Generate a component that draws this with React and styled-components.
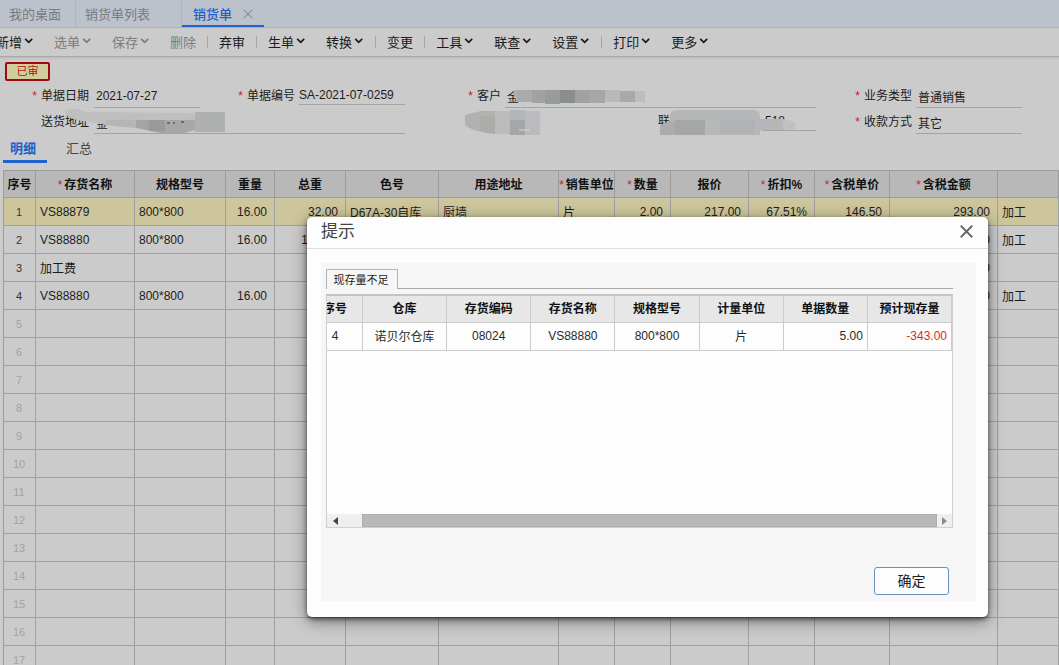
import React from "react";
import styled, { createGlobalStyle, css } from "styled-components";

const Global = createGlobalStyle`
  * { box-sizing: border-box; }
  body { margin: 0; background: #cbcbcb; }
  body, button, input, table {
    font-family: "Liberation Sans", "Noto Sans CJK SC", sans-serif;
    font-size: 12px;
    color: #1c1c1c;
  }
  button { border: 0; padding: 0; background: none; cursor: pointer; }
`;

const Page = styled.div`
  position: relative;
  display: flex;
  flex-direction: column;
  height: 100vh;
  overflow: hidden;
`;

/* Window tabs */
const WindowTabs = styled.nav`
  display: flex;
  flex: none;
  height: 28px;
  background: #bcc2cc;
  border-bottom: 1px solid #adb0b4;
`;
const WindowTab = styled.button`
  display: flex;
  align-items: center;
  justify-content: space-between;
  height: 27px;
  padding: 0 14px 0 9px;
  font-size: 13px;
  color: #777a7f;
  border-right: 1px solid #b1b6be;
  ${(p) => p.$wide && css`padding-right: 31px;`}
  ${(p) =>
    p.$active &&
    css`
      width: 82px;
      padding: 2px 11px 0;
      color: #1f5fc8;
      font-weight: 500;
      border-right: 0;
      border-bottom: 2px solid #1f63cf;
    `}
`;

/* Toolbar */
const Toolbar = styled.div`
  display: flex;
  align-items: center;
  flex: none;
  height: 29px;
  margin-left: -15px;
  border-bottom: 1px solid #a9a9a9;
  box-shadow: 0 1px 2px #b5b5b5;
`;
const ToolButton = styled.button`
  display: flex;
  align-items: center;
  gap: 2px;
  height: 26px;
  padding: 0 10px 2px 11px;
  font-size: 13px;
  white-space: nowrap;
  color: ${(p) => (p.disabled ? "#7d7d7d" : "#1c1c1c")};
`;
const Divider = styled.span`
  width: 1px;
  height: 12px;
  margin: 0 0 0 ${(p) => (p.$afterMenu ? 2 : 1)}px;
  background: #a6a6a6;
`;

/* Document form */
const StatusBadge = styled.div`
  flex: none;
  align-self: flex-start;
  width: 45px;
  height: 19px;
  margin: 5px 0 0 5px;
  border: 2px solid #a3090c;
  border-radius: 2px;
  background: #d0cd9d;
  color: #b5160f;
  font-size: 11px;
  line-height: 15px;
  text-align: center;
`;
const Form = styled.form`
  display: grid;
  flex: none;
  grid-template-columns: 94px 106px 99px 106px 100px minmax(0, 1fr) 100px 106px;
  grid-auto-rows: 26px;
  padding: 1px 37px 0 0;
`;
const Label = styled.label`
  padding-right: ${(p) => (p.$loose ? 4 : 5)}px;
  line-height: 28px;
  text-align: right;
  white-space: nowrap;
`;
const Star = styled.span`
  margin-right: ${(p) => (p.$near ? 2 : 4)}px;
  color: #c8202c;
  font-weight: 400;
`;
const Field = styled.div`
  position: relative;
  display: flex;
  min-width: 0;
  ${(p) => p.$span && css`grid-column: span ${p.$span};`}
`;
const TextInput = styled.input`
  flex: 1;
  min-width: 0;
  width: 100%;
  height: ${(p) => (p.$short ? 23 : 26)}px;
  padding: 3px 0 0 ${(p) => (p.$flush ? 0 : 2)}px;
  border: 0;
  border-bottom: 1px solid #a4a4a4;
  background: transparent;
  outline: none;
`;
const ContactLabel = styled.label`
  width: 105px;
  margin-left: 153px;
  height: 23px;
  line-height: 27px;
  border-bottom: 1px solid #c3c3c3;
`;
const Mosaic = styled.svg`
  position: absolute;
  left: ${(p) => p.$x}px;
  top: ${(p) => p.$y}px;
  pointer-events: none;
`;

/* Section tabs */
const SectionTabs = styled.div`
  display: flex;
  flex: none;
  gap: 12px;
  padding: 1px 3px 7px;
`;
const SectionTab = styled.button`
  width: 44px;
  height: 28px;
  padding-right: 4px;
  font-size: 13px;
  color: ${(p) => (p.$active ? "#1f5fc8" : "#444")};
  font-weight: ${(p) => (p.$active ? 700 : 400)};
  border-bottom: 3px solid ${(p) => (p.$active ? "#1f63cf" : "transparent")};
`;

/* Order lines */
const GridWrap = styled.div`
  flex: 1;
  min-height: 0;
  overflow: hidden;
  padding-left: 3px;
`;
const Grid = styled.table`
  width: 100%;
  table-layout: fixed;
  border-collapse: separate;
  border-spacing: 0;
  border-left: 1px solid #9c9c9c;
`;
const Th = styled.th`
  height: 28px;
  padding: 0 0 2px;
  overflow: hidden;
  white-space: nowrap;
  background: #b8b8b9;
  border: solid #9c9c9c;
  border-width: 1px 1px 1px 0;
  color: #111;
`;
const Tr = styled.tr`
  background: ${(p) => (p.$selected ? "#cdc69c" : "transparent")};
`;
const Td = styled.td`
  height: 28px;
  padding: 0 7px 0 4px;
  overflow: hidden;
  white-space: nowrap;
  text-align: ${(p) => p.$align || "left"};
  border: solid #a0a0a0;
  border-width: 0 1px 1px 0;
`;
const IndexTd = styled(Td)`
  padding: 0 1px 0 0;
  text-align: center;
  font-size: 11px;
  color: ${(p) => (p.$empty ? "#a2a2a2" : "#333")};
`;

/* Dialog */
const Overlay = styled.div`
  position: absolute;
  inset: 0;
  display: flex;
  align-items: flex-start;
  padding: 217px 71px 0 307px;
`;
const Dialog = styled.section`
  flex: 1;
  min-width: 0;
  padding-bottom: 16px;
  background: #fdfdfd;
  border-radius: 5px;
  box-shadow: 0 2px 4px rgba(0, 0, 0, 0.55), 0 4px 16px rgba(0, 0, 0, 0.45);
`;
const DialogHead = styled.header`
  display: flex;
  align-items: center;
  justify-content: space-between;
  height: 32px;
  padding: 0 14px 2px;
  border-bottom: 1px solid #dedede;
`;
const DialogTitle = styled.h2`
  margin: 0;
  font-size: 17px;
  line-height: 24px;
  font-weight: 400;
  color: #444;
`;
const CloseButton = styled.button`
  display: flex;
  align-items: center;
  justify-content: center;
  width: 15px;
  height: 15px;
`;
const Panel = styled.div`
  margin: 14px 12px 0 14px;
  padding: 6px 23px 6px 5px;
  background: #f6f6f6;
`;
const TabRow = styled.div`
  display: flex;
  height: 20px;
`;
const DialogTab = styled.button`
  width: 72px;
  padding-right: 2px;
  border: 1px solid #b4b4b4;
  border-bottom: 0;
  font-size: 11px;
  line-height: 16px;
`;
const TabRule = styled.span`
  flex: 1;
  border-bottom: 1px solid #a8a8a8;
`;
const StockBox = styled.div`
  display: flex;
  flex-direction: column;
  height: 234px;
  margin-top: 5px;
  overflow: hidden;
  background: #fdfdfd;
  border: 1px solid #cfcfcf;
  border-top: 2px solid #c4c4c4;
`;
const StockScroll = styled.div`
  flex: 1;
  overflow: hidden;
`;
const StockTable = styled.table`
  width: calc(100% + 19px);
  margin-left: -19px;
  table-layout: fixed;
  border-collapse: separate;
  border-spacing: 0;
`;
const StockTh = styled.th`
  height: 27px;
  padding: 0 0 4px;
  background: #e7e7e8;
  border: solid #cbcbcb;
  border-width: 0 1px 1px 0;
  color: #111;
`;
const StockTd = styled.td`
  height: 28px;
  padding: 0 4px 2px;
  border: solid #cbcbcb;
  border-width: 0 1px 1px 0;
  text-align: ${(p) => (p.$num ? "right" : "center")};
  color: ${(p) => (p.$warn ? "#e02a2a" : "#2b2b2b")};
`;
const ScrollBar = styled.div`
  display: grid;
  grid-template-columns: 17px 18px minmax(0, 1fr) 15px;
  align-items: center;
  justify-items: center;
  height: 13px;
  background: #efefef;
`;
const Thumb = styled.span`
  grid-column: 3;
  width: 100%;
  height: 13px;
  background: #b9b9b9;
  border: 1px solid #adadad;
`;
const Actions = styled.footer`
  display: flex;
  justify-content: flex-end;
  margin: 39px 4px 0 0;
`;
const OkButton = styled.button`
  width: 75px;
  height: 28px;
  padding-bottom: 2px;
  font-size: 14px;
  background: #fdfdfd;
  border: 1px solid #6d8fbd;
  border-radius: 3px;
`;

const Chevron = () => (
  <svg width="9" height="8" viewBox="0 0 9 8" fill="none" stroke="currentColor" strokeWidth="1.8" aria-hidden="true">
    <path d="M1.2 1.9 4.7 5.3 8.2 1.9" />
  </svg>
);
const Cross = ({ size, color, width }) => (
  <svg width={size} height={size} viewBox="0 0 12 12" fill="none" stroke={color} strokeWidth={width} aria-hidden="true">
    <path d="M.7.7 11.3 11.3M11.3.7.7 11.3" />
  </svg>
);

const tools = [
  { name: "新增", menu: true },
  { name: "选单", menu: true, off: true },
  { name: "保存", menu: true, off: true },
  { name: "删除", off: true },
  "|",
  { name: "弃审" },
  "|",
  { name: "生单", menu: true },
  { name: "转换", menu: true },
  "||",
  { name: "变更" },
  "|",
  { name: "工具", menu: true },
  { name: "联查", menu: true },
  { name: "设置", menu: true },
  "||",
  { name: "打印", menu: true },
  { name: "更多", menu: true },
];

const columns = [
  { title: "序号", width: 32 },
  { title: "存货名称", width: 99, required: true },
  { title: "规格型号", width: 91 },
  { title: "重量", width: 49, align: "right" },
  { title: "总重", width: 71, align: "right" },
  { title: "色号", width: 93 },
  { title: "用途地址", width: 120 },
  { title: "销售单位", width: 56, required: true },
  { title: "数量", width: 56, required: true, align: "right" },
  { title: "报价", width: 78, align: "right" },
  { title: "折扣%", width: 66, required: true, align: "right" },
  { title: "含税单价", width: 75, required: true, align: "right" },
  { title: "含税金额", width: 108, required: true, align: "right" },
  { title: "" },
];

const lines = [
  ["VS88879", "800*800", "16.00", "32.00", "D67A-30自库", "厨墙", "片", "2.00", "217.00", "67.51%", "146.50", "293.00", "加工"],
  ["VS88880", "800*800", "16.00", "160.00", "", "", "", "", "", "", "", "0.00", "加工"],
  ["加工费", "", "", "", "", "", "", "", "", "", "", "0.00", ""],
  ["VS88880", "800*800", "16.00", "", "", "", "", "", "", "", "", "0.00", "加工"],
];
const rows = Array.from({ length: 17 }, (_, i) => lines[i] || null);

const stockHeads = ["序号", "仓库", "存货编码", "存货名称", "规格型号", "计量单位", "单据数量", "预计现存量"];
const stock = ["4", "诺贝尔仓库", "08024", "VS88880", "800*800", "片", "5.00", "-343.00"];

const Req = () => <Star>*</Star>;

export default function App() {
  return (
    <Page>
      <Global />
      <WindowTabs>
        <WindowTab>我的桌面</WindowTab>
        <WindowTab $wide>销货单列表</WindowTab>
        <WindowTab $active>
          销货单
          <Cross size={10} color="#8b8f95" width={1.3} />
        </WindowTab>
      </WindowTabs>

      <Toolbar>
        {tools.map((t, i) =>
          typeof t === "string" ? (
            <Divider key={i} $afterMenu={t === "||"} />
          ) : (
            <ToolButton key={i} disabled={t.off}>
              {t.name}
              {t.menu && <Chevron />}
            </ToolButton>
          )
        )}
      </Toolbar>

      <StatusBadge>已审</StatusBadge>

      <Form>
        <Label htmlFor="date"><Req />单据日期</Label>
        <Field><TextInput id="date" defaultValue="2021-07-27" /></Field>
        <Label htmlFor="number" $loose><Req />单据编号</Label>
        <Field><TextInput id="number" $short $flush defaultValue="SA-2021-07-0259" /></Field>
        <Label htmlFor="customer" $loose><Req />客户</Label>
        <Field>
          <TextInput id="customer" defaultValue="金" />
          <Mosaic $x={6} $y={7} width="136" height="15">
            <path d="M4 1h3v12H6L2 4z" fill="#aeb0b0" />
            <rect x="6" y="1" width="15" height="12" fill="#a9aaa9" />
            <rect x="21" y="1" width="13" height="13" fill="#a0a3a4" />
            <rect x="34" y="1" width="15" height="14" fill="#989c9d" />
            <rect x="49" y="1" width="15" height="13" fill="#8b8e8e" />
            <rect x="64" y="1" width="15" height="13" fill="#a0a2a2" />
            <rect x="79" y="1" width="15" height="13" fill="#a7a7a7" />
            <rect x="94" y="1" width="15" height="12" fill="#b7b9ba" />
            <rect x="109" y="2" width="15" height="11" fill="#a7a9ab" />
            <rect x="124" y="2" width="10" height="11" fill="#bbbdbf" />
          </Mosaic>
        </Field>
        <Label htmlFor="kind" $loose><Req />业务类型</Label>
        <Field><TextInput id="kind" defaultValue="普通销售" /></Field>

        <Label htmlFor="address">送货地址</Label>
        <Field $span={3}>
          <TextInput id="address" defaultValue="金" />
          <Mosaic $x={-29} $y={0} width="164" height="27">
            <path d="M0 5Q2 0 12 1l10 3 108 1v17h-30L71 20 41 17 12 12Q3 10 0 5z" fill="#bebfbe" />
            <path d="M41 12h30v8l-30-3z" fill="#b5b5b5" />
            <path d="M71 12h29v14L71 20z" fill="#a3a5a5" />
            <rect x="84" y="12" width="16" height="11" fill="#989b9b" />
            <path d="M100 12h30v10l-14 4h-16z" fill="#a6a8a8" />
            <path d="M130 4h30v20h-30z" fill="#afb0b0" />
            <path d="M102 15h3m3 0h2m6-1h3" stroke="#333" />
          </Mosaic>
        </Field>
        <Field as="span" />
        <Field>
          <ContactLabel htmlFor="contact">联</ContactLabel>
          <TextInput id="contact" $short defaultValue="518" />
          <Mosaic $x={-40} $y={2} width="104" height="26">
            <path d="M0 5 16 1h14v23Q8 22 0 15z" fill="#b1b2b0" />
            <path d="M15 6h15v17l-15-2z" fill="#acacaa" />
            <path d="M45 0h15v25H45z" fill="#b4b5b7" />
            <path d="M45 10h15v15H45z" fill="#a5a6a8" />
            <path d="M30 1h15v23H30z" fill="#bcbcbc" />
            <path d="M60 1h15v24H60z" fill="#b9bbbf" />
            <path d="M54 20h11" stroke="#d7d7d7" />
          </Mosaic>
          <Mosaic $x={153} $y={1} width="146" height="26">
            <path d="M12 6Q13 1 19 1h77q6 1 6 6v19H2V17l10-6z" fill="#b6b8b8" />
            <path d="M2 17 12 12h5v14H2z" fill="#acacac" />
            <path d="M17 11h30v15H17z" fill="#a5a6a6" />
            <path d="M47 11h15v15H47z" fill="#b7b8ba" />
            <path d="M62 11h35v14H62z" fill="#b0b2b5" />
            <path d="M97 10h28v11H97z" fill="#b4b6b9" />
            <path d="M125 10l12 3v7l-12 1z" fill="#bfc0c2" />
          </Mosaic>
        </Field>
        <Label htmlFor="payment" $loose><Req />收款方式</Label>
        <Field><TextInput id="payment" defaultValue="其它" /></Field>
      </Form>

      <SectionTabs>
        <SectionTab $active>明细</SectionTab>
        <SectionTab>汇总</SectionTab>
      </SectionTabs>

      <GridWrap>
        <Grid>
          <colgroup>
            {columns.map((c, i) => <col key={i} width={c.width} />)}
          </colgroup>
          <thead>
            <tr>
              {columns.map((c, i) => (
                <Th key={i}>
                  {c.required && <Star $near>*</Star>}
                  {c.title}
                </Th>
              ))}
            </tr>
          </thead>
          <tbody>
            {rows.map((r, i) => (
              <Tr key={i} $selected={i === 0}>
                <IndexTd $empty={!r}>{i + 1}</IndexTd>
                {columns.slice(1).map((c, j) => (
                  <Td key={j} $align={c.align}>{r ? r[j] : ""}</Td>
                ))}
              </Tr>
            ))}
          </tbody>
        </Grid>
      </GridWrap>

      <Overlay>
        <Dialog role="dialog" aria-labelledby="dialog-title">
          <DialogHead>
            <DialogTitle id="dialog-title">提示</DialogTitle>
            <CloseButton aria-label="关闭">
              <Cross size={13} color="#666" width={1.7} />
            </CloseButton>
          </DialogHead>
          <Panel>
            <TabRow>
              <DialogTab>现存量不足</DialogTab>
              <TabRule />
            </TabRow>
            <StockBox>
              <StockScroll>
                <StockTable>
                  <colgroup>
                    <col width="55" />
                  </colgroup>
                  <thead>
                    <tr>{stockHeads.map((h) => <StockTh key={h}>{h}</StockTh>)}</tr>
                  </thead>
                  <tbody>
                    <tr>
                      {stock.map((v, i) => (
                        <StockTd key={i} $num={i > 5} $warn={i === 7}>{v}</StockTd>
                      ))}
                    </tr>
                  </tbody>
                </StockTable>
              </StockScroll>
              <ScrollBar>
                <svg width="5" height="8" aria-hidden="true"><path d="M5 0v8L0 4z" fill="#444" /></svg>
                <Thumb />
                <svg width="5" height="8" aria-hidden="true"><path d="M0 0v8l5-4z" fill="#8a8a8a" /></svg>
              </ScrollBar>
            </StockBox>
            <Actions>
              <OkButton>确定</OkButton>
            </Actions>
          </Panel>
        </Dialog>
      </Overlay>
    </Page>
  );
}
